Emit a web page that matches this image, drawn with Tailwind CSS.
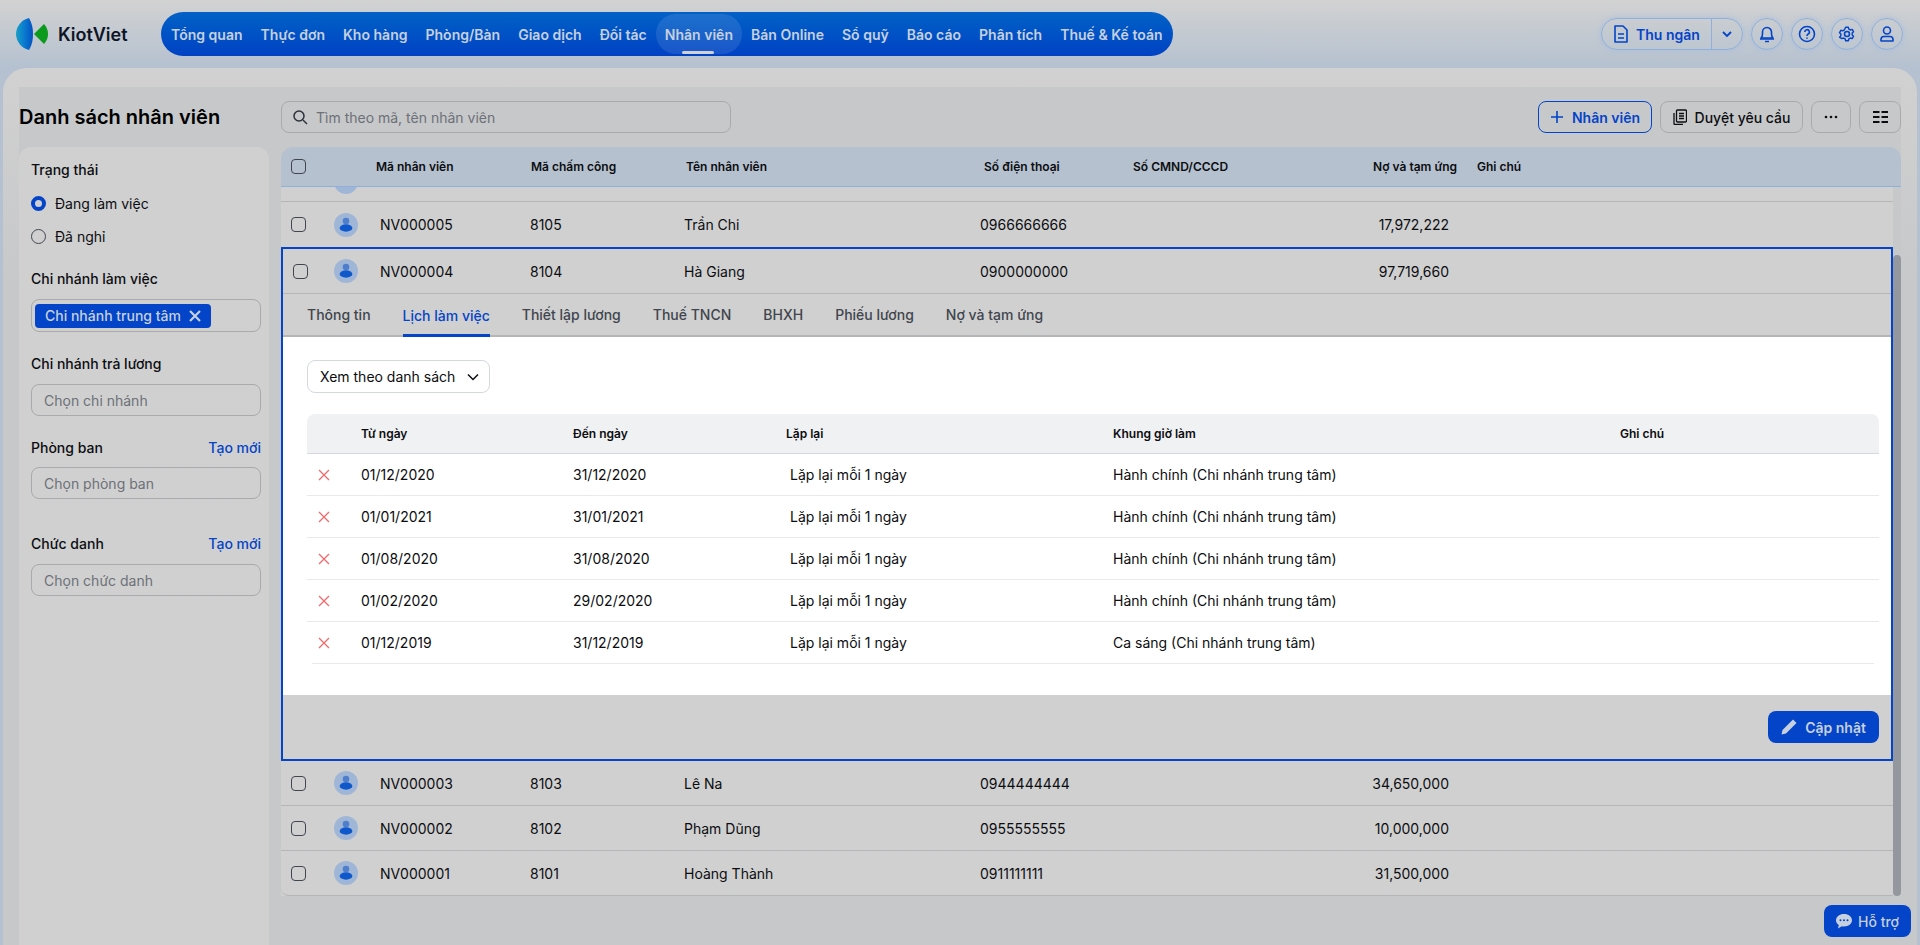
<!DOCTYPE html>
<html lang="en">
<head>
    <meta charset="UTF-8">
    <title>KiotViet - Danh sách nhân viên</title>
    <script src="https://cdn.jsdelivr.net/npm/@tailwindcss/browser@4"></script>
</head>
<body class="h-screen overflow-hidden bg-[linear-gradient(#d2d2d2,#b5c1d0_68px)] font-['Inter','Noto_Sans',sans-serif] text-[14px] text-[#0c0d10]">

<!-- Top bar -->
<header class="flex h-[68px] items-start pl-4 pr-[17px] pt-3">
    <div class="flex h-11 w-[145px] items-center gap-2.5">
        <svg width="32" height="32" viewBox="0 0 32 32">
            <defs><linearGradient id="leaf" x1="0" x2="1" y1="0" y2="0"><stop offset="0" stop-color="#17a0c4"/><stop offset="0.5" stop-color="#0a7ad0"/><stop offset="1" stop-color="#0452bf"/></linearGradient></defs>
            <path d="M13 0C5 2 0 9 0 16s5 14 13 16c3-5 4-10 4-16S16 5 13 0Z" fill="url(#leaf)"/>
            <path d="M18 16 28 6c3 3 4 7 4 10s-1 7-4 10Z" fill="#0a9a1c"/>
        </svg>
        <span class="text-[18px] font-semibold text-[#0e1526]">KiotViet</span>
    </div>
    <nav class="flex h-11 items-center gap-2 rounded-[22px] bg-gradient-to-b from-[#0561c6] to-[#0041c4] px-[5px] font-semibold tracking-[0.012px] text-[#c6d0de]">
        <a class="px-[5px]">Tổng quan</a>
        <a class="px-[5px]">Thực đơn</a>
        <a class="px-[5px]">Kho hàng</a>
        <a class="px-[5px]">Phòng/Bàn</a>
        <a class="px-[5px]">Giao dịch</a>
        <a class="px-[5px]">Đối tác</a>
        <a class="relative -mx-1 flex h-10 items-center rounded-[20px] bg-white/10 px-[9px]">Nhân viên<span class="absolute bottom-0 left-[26px] h-[3px] w-8 rounded-full bg-[#d1d1d1]"></span></a>
        <a class="px-[5px]">Bán Online</a>
        <a class="px-[5px]">Sổ quỹ</a>
        <a class="px-[5px]">Báo cáo</a>
        <a class="px-[5px]">Phân tích</a>
        <a class="px-[5px]">Thuế &amp; Kế toán</a>
    </nav>
    <div class="ml-auto mt-1.5 flex items-center gap-2 text-[#0344c8]">
        <div class="flex h-8 w-[142px] items-center rounded-full border border-[#8fb0db] shadow-[0_0_6px_#a9bfdc]">
            <span class="flex h-full w-[110px] items-center gap-[7px] border-r border-[#8fb0db] pl-[11px] font-semibold">
                <svg width="16" height="18" viewBox="0 0 16 18" fill="none" stroke="currentColor" stroke-width="1.6"><path d="M2 1h8l4 4v12H2z" stroke-linejoin="round"/><path d="M5 9h6M5 13h6"/></svg>
                Thu ngân
            </span>
            <span class="flex flex-1 justify-center">
                <svg width="12" height="8" viewBox="0 0 12 8" fill="none" stroke="currentColor" stroke-width="1.8"><path d="m2 2 4 4 4-4"/></svg>
            </span>
        </div>
        <span class="flex h-8 w-8 items-center justify-center rounded-full border border-[#8fb0db] shadow-[0_0_6px_#a9bfdc]">
            <svg width="16" height="18" viewBox="0 0 16 18" fill="none" stroke="currentColor" stroke-width="1.6"><path d="M2 13c1-1 1.500-2 1.500-4V7a4.500 4.500 0 0 1 9 0v2c0 2 .5 3 1.500 4z" stroke-linejoin="round"/><path d="M1 14h14M6 16.500h4"/></svg>
        </span>
        <span class="flex h-8 w-8 items-center justify-center rounded-full border border-[#8fb0db] shadow-[0_0_6px_#a9bfdc]">
            <svg width="18" height="18" viewBox="0 0 18 18" fill="none" stroke="currentColor" stroke-width="1.6"><circle cx="9" cy="9" r="7.500"/><path d="M6.800 7a2.300 2.300 0 1 1 3.400 2c-.8.5-1.200 1-1.200 2"/><path d="M9 12.500v1.200"/></svg>
        </span>
        <span class="flex h-8 w-8 items-center justify-center rounded-full border border-[#8fb0db] shadow-[0_0_6px_#a9bfdc]">
            <svg width="18" height="18" viewBox="0 0 18 18" fill="none" stroke="currentColor" stroke-width="1.6"><circle cx="9" cy="9" r="2.500"/><path d="M7.500 1.500h3l.5 2 1.800 1 2-.6 1.500 2.600-1.500 1.500v2l1.500 1.500-1.500 2.600-2-.6-1.800 1-.5 2h-3l-.5-2-1.800-1-2 .6L.700 12.500 2.200 11V9L.700 7.500l1.500-2.600 2 .6 1.800-1z" stroke-linejoin="round" transform="translate(.9 .9) scale(.9)"/></svg>
        </span>
        <span class="flex h-8 w-8 items-center justify-center rounded-full border border-[#8fb0db] shadow-[0_0_6px_#a9bfdc]">
            <svg width="16" height="18" viewBox="0 0 16 18" fill="none" stroke="currentColor" stroke-width="1.6"><circle cx="8" cy="5.500" r="3.500"/><path d="M2 16v-1.500c0-2 1.500-3 3-3h6c1.500 0 3 1 3 3V16z" stroke-linejoin="round"/></svg>
        </span>
    </div>
</header>

<!-- Main card -->
<main class="mx-[3px] h-[877px] rounded-t-[24px] bg-[linear-gradient(#d1d1d1,#c7c8ca_220px)] px-4 pt-[19px]">
    <div class="flex h-full gap-3 bg-[#c7c8ca] pt-[14px]">

        <!-- Left column -->
        <aside class="w-[250px] shrink-0">
            <h1 class="flex h-8 items-center text-[20px] font-semibold text-black">Danh sách nhân viên</h1>
            <div class="mt-3.5 h-[800px] rounded-t-xl bg-[#d0d0d0] pl-3 pr-2 pt-3.5 font-medium">
                <p class="leading-[17px]">Trạng thái</p>
                <label class="mt-[17px] flex items-center gap-[9px] font-normal leading-[17px]">
                    <span class="h-[15px] w-[15px] rounded-full border-[4px] border-[#0344c8] bg-[#d0d0d0]"></span>Đang làm việc
                </label>
                <label class="mt-4 flex items-center gap-[9px] font-normal leading-[17px]">
                    <span class="h-[15px] w-[15px] rounded-full border border-[#40464f]"></span>Đã nghỉ
                </label>

                <p class="mt-[25px] leading-[17px]">Chi nhánh làm việc</p>
                <div class="mt-[12px] flex h-[33px] items-center rounded-lg border border-[#a9aaab] px-[3px]">
                    <span class="flex h-6 w-[176px] items-center gap-2 rounded-[4px] bg-[#0344c8] pl-2.5 font-medium text-[#c6d0de]">Chi nhánh trung tâm
                        <svg width="12" height="12" viewBox="0 0 12 12" stroke="currentColor" stroke-width="2.2"><path d="m1 1 10 10M11 1 1 11"/></svg>
                    </span>
                </div>

                <p class="mt-[23px] leading-[17px]">Chi nhánh trả lương</p>
                <div class="mt-[12px] flex h-8 items-center rounded-lg border border-[#a9aaab] px-3 font-normal text-[#6d7178]">Chọn chi nhánh</div>

                <p class="mt-[23px] flex justify-between leading-[17px]">Phòng ban <a class="text-[#0344c8]">Tạo mới</a></p>
                <div class="mt-[11px] flex h-8 items-center rounded-lg border border-[#a9aaab] px-3 font-normal text-[#6d7178]">Chọn phòng ban</div>

                <p class="mt-[36px] flex justify-between leading-[17px]">Chức danh <a class="text-[#0344c8]">Tạo mới</a></p>
                <div class="mt-[12px] flex h-8 items-center rounded-lg border border-[#a9aaab] px-3 font-normal text-[#6d7178]">Chọn chức danh</div>
            </div>
        </aside>

        <!-- Right column -->
        <section class="min-w-0 flex-1">
            <!-- Toolbar -->
            <div class="flex h-8 items-center">
                <div class="flex h-8 w-[450px] items-center gap-2 rounded-lg border border-[#a9aaab] px-2.5 text-[#6d7178]">
                    <svg width="16" height="16" viewBox="0 0 16 16" fill="none" stroke="#2c3038" stroke-width="1.500"><circle cx="7" cy="7" r="5"/><path d="m11 11 4 4"/></svg>
                    Tìm theo mã, tên nhân viên
                </div>
                <button class="ml-auto flex h-8 w-[114px] items-center justify-center gap-2 rounded-lg border border-[#0344c8] font-semibold text-[#0344c8]">
                    <svg width="14" height="14" viewBox="0 0 14 14" stroke="currentColor" stroke-width="1.600"><path d="M7 1v12M1 7h12"/></svg>
                    Nhân viên
                </button>
                <button class="ml-2 flex h-8 w-[143px] items-center justify-center gap-2 rounded-lg border border-[#a9aaab] font-medium">
                    <svg width="14" height="16" viewBox="0 0 14 16" fill="none" stroke="currentColor" stroke-width="1.300"><rect x="3.500" y="1" width="10" height="12" rx="1"/><path d="M1 4v10.500c0 .5.500 1 1 1h8M6 4.500h5M6 7h5M6 9.500h5"/></svg>
                    Duyệt yêu cầu
                </button>
                <button class="ml-2 flex h-8 w-10 items-center justify-center rounded-lg border border-[#a9aaab]">
                    <svg width="14" height="4" viewBox="0 0 14 4" fill="currentColor"><circle cx="2" cy="2" r="1.300"/><circle cx="7" cy="2" r="1.300"/><circle cx="12" cy="2" r="1.300"/></svg>
                </button>
                <button class="ml-2 flex h-8 w-[42px] items-center justify-center rounded-lg border border-[#a9aaab]">
                    <svg width="15" height="12" viewBox="0 0 15 12" fill="currentColor"><path d="M0 0h6.500v2H0zM8.500 0H15v2H8.500zM0 5h6.500v2H0zM8.500 5H15v2H8.500zM0 10h6.500v2H0zM8.500 10H15v2H8.500z"/></svg>
                </button>
            </div>

            <!-- Table -->
            <div class="relative mt-3.5">
                <div class="grid h-[40px] grid-cols-[95px_155px_155px_298px_149px_150px_194px_1fr] items-center rounded-t-xl border-b border-[#8fb0db] bg-[#b5c1cf] text-[12px] font-semibold">
                    <span class="pl-[10px]"><span class="block h-[15px] w-[15px] rounded-[4px] border border-[#40464f]"></span></span>
                    <span>Mã nhân viên</span>
                    <span>Mã chấm công</span>
                    <span>Tên nhân viên</span>
                    <span>Số điện thoại</span>
                    <span>Số CMND/CCCD</span>
                    <span class="pr-5 text-right">Nợ và tạm ứng</span>
                    <span>Ghi chú</span>
                </div>
                <div class="mr-2 h-[15px] overflow-hidden border-b border-[#b4b5b6] bg-[#d0d0d0] pl-[53px]">
                    <span class="-mt-[17px] block h-6 w-6 rounded-full bg-[#a0b6d7]"></span>
                </div>
                <div class="mr-2 bg-[#d0d0d0]">
                    <div class="grid h-[45px] grid-cols-[99px_150px_154px_296px_180px_289px] items-center text-[14px]">
                        <span class="flex items-center pl-[10px]"><span class="block h-[15px] w-[15px] rounded-[4px] border border-[#40464f]"></span>
                            <svg class="ml-[28px]" width="24" height="24" viewBox="0 0 24 24"><circle cx="12" cy="12" r="12" fill="#a0b6d7"/><circle cx="12" cy="8" r="3.300" fill="#4f7fcb"/><ellipse cx="12" cy="15" rx="6.400" ry="3.700" fill="#0f58cc"/></svg>
                        </span>
                        <span>NV000005</span><span>8105</span><span>Trần Chi</span><span>0966666666</span>
                        <span class="text-right">17,972,222</span>
                    </div>

                    <!-- Expanded row -->
                    <div class="border-2 border-[#0344c8]">
                        <div class="grid h-[45px] grid-cols-[97px_150px_154px_296px_180px_289px] items-center border-b border-[#b4b5b6]">
                            <span class="flex items-center pl-[10px]"><span class="block h-[15px] w-[15px] rounded-[4px] border border-[#40464f]"></span>
                                <svg class="ml-[26px]" width="24" height="24" viewBox="0 0 24 24"><circle cx="12" cy="12" r="12" fill="#a0b6d7"/><circle cx="12" cy="8" r="3.300" fill="#4f7fcb"/><ellipse cx="12" cy="15" rx="6.400" ry="3.700" fill="#0f58cc"/></svg>
                            </span>
                            <span>NV000004</span><span>8104</span><span>Hà Giang</span><span>0900000000</span>
                            <span class="text-right">97,719,660</span>
                        </div>
                        <div class="flex h-[43px] gap-8 border-b-2 border-[#b4b5b6] pl-6 font-medium text-[#40454d]">
                            <span class="flex items-center">Thông tin</span>
                            <span class="-mb-[2px] flex items-center border-b-[3px] border-[#0344c8] pt-[3px] text-[#0344c8]">Lịch làm việc</span>
                            <span class="flex items-center">Thiết lập lương</span>
                            <span class="flex items-center">Thuế TNCN</span>
                            <span class="flex items-center">BHXH</span>
                            <span class="flex items-center">Phiếu lương</span>
                            <span class="flex items-center">Nợ và tạm ứng</span>
                        </div>
                        <div class="h-[358px] bg-white pl-6 pr-3 pt-[23px]">
                            <div class="flex h-[33px] w-[183px] items-center justify-between rounded-lg border border-[#d5d8dc] pl-3 pr-2.5">
                                Xem theo danh sách
                                <svg width="12" height="8" viewBox="0 0 12 8" fill="none" stroke="currentColor" stroke-width="1.500"><path d="m1 1.500 5 5 5-5"/></svg>
                            </div>
                            <div class="mt-[21px]">
                                <div class="grid h-[40px] grid-cols-[54px_212px_213px_327px_507px_1fr] items-center rounded-t-lg border-b border-[#d5d8dc] bg-[#f0f1f3] text-[12px] font-semibold">
                                    <span></span><span>Từ ngày</span><span>Đến ngày</span><span>Lặp lại</span><span>Khung giờ làm</span><span>Ghi chú</span>
                                </div>
                                <div class="grid h-[42px] grid-cols-[54px_212px_213px_327px_507px_1fr] items-center border-b border-[#e8e9eb]">
                                    <svg class="ml-[11px]" width="12" height="12" viewBox="0 0 12 12" stroke="#f0696c" stroke-width="1.300"><path d="m1 1 10 10M11 1 1 11"/></svg>
                                    <span>01/12/2020</span><span>31/12/2020</span><span class="pl-1">Lặp lại mỗi 1 ngày</span><span>Hành chính (Chi nhánh trung tâm)</span><span></span>
                                </div>
                                <div class="grid h-[42px] grid-cols-[54px_212px_213px_327px_507px_1fr] items-center border-b border-[#e8e9eb]">
                                    <svg class="ml-[11px]" width="12" height="12" viewBox="0 0 12 12" stroke="#f0696c" stroke-width="1.300"><path d="m1 1 10 10M11 1 1 11"/></svg>
                                    <span>01/01/2021</span><span>31/01/2021</span><span class="pl-1">Lặp lại mỗi 1 ngày</span><span>Hành chính (Chi nhánh trung tâm)</span><span></span>
                                </div>
                                <div class="grid h-[42px] grid-cols-[54px_212px_213px_327px_507px_1fr] items-center border-b border-[#e8e9eb]">
                                    <svg class="ml-[11px]" width="12" height="12" viewBox="0 0 12 12" stroke="#f0696c" stroke-width="1.300"><path d="m1 1 10 10M11 1 1 11"/></svg>
                                    <span>01/08/2020</span><span>31/08/2020</span><span class="pl-1">Lặp lại mỗi 1 ngày</span><span>Hành chính (Chi nhánh trung tâm)</span><span></span>
                                </div>
                                <div class="grid h-[42px] grid-cols-[54px_212px_213px_327px_507px_1fr] items-center border-b border-[#e8e9eb]">
                                    <svg class="ml-[11px]" width="12" height="12" viewBox="0 0 12 12" stroke="#f0696c" stroke-width="1.300"><path d="m1 1 10 10M11 1 1 11"/></svg>
                                    <span>01/02/2020</span><span>29/02/2020</span><span class="pl-1">Lặp lại mỗi 1 ngày</span><span>Hành chính (Chi nhánh trung tâm)</span><span></span>
                                </div>
                                <div class="ml-[5px] mr-[5px] grid h-[42px] grid-cols-[49px_212px_213px_327px_507px_1fr] items-center border-b border-[#e8e9eb]">
                                    <svg class="ml-[6px]" width="12" height="12" viewBox="0 0 12 12" stroke="#f0696c" stroke-width="1.300"><path d="m1 1 10 10M11 1 1 11"/></svg>
                                    <span>01/12/2019</span><span>31/12/2019</span><span class="pl-1">Lặp lại mỗi 1 ngày</span><span>Ca sáng (Chi nhánh trung tâm)</span><span></span>
                                </div>
                            </div>
                        </div>
                        <div class="flex h-[64px] items-start justify-end pr-3 pt-4">
                            <button class="flex h-8 w-[111px] items-center justify-center gap-2 rounded-lg bg-[#0344c8] font-semibold text-[#c6d0de]">
                                <svg width="16" height="16" viewBox="0 0 16 16" fill="currentColor"><path d="M12 .5 15.500 4 5 14.500l-4.500 1 1-4.500z"/></svg>
                                Cập nhật
                            </button>
                        </div>
                    </div>

                    <div class="grid h-[45px] grid-cols-[99px_150px_154px_296px_180px_289px] items-center border-b border-[#b4b5b6]">
                        <span class="flex items-center pl-[10px]"><span class="block h-[15px] w-[15px] rounded-[4px] border border-[#40464f]"></span>
                            <svg class="ml-[28px]" width="24" height="24" viewBox="0 0 24 24"><circle cx="12" cy="12" r="12" fill="#a0b6d7"/><circle cx="12" cy="8" r="3.300" fill="#4f7fcb"/><ellipse cx="12" cy="15" rx="6.400" ry="3.700" fill="#0f58cc"/></svg>
                        </span>
                        <span>NV000003</span><span>8103</span><span>Lê Na</span><span>0944444444</span>
                        <span class="text-right">34,650,000</span>
                    </div>
                    <div class="grid h-[45px] grid-cols-[99px_150px_154px_296px_180px_289px] items-center border-b border-[#b4b5b6]">
                        <span class="flex items-center pl-[10px]"><span class="block h-[15px] w-[15px] rounded-[4px] border border-[#40464f]"></span>
                            <svg class="ml-[28px]" width="24" height="24" viewBox="0 0 24 24"><circle cx="12" cy="12" r="12" fill="#a0b6d7"/><circle cx="12" cy="8" r="3.300" fill="#4f7fcb"/><ellipse cx="12" cy="15" rx="6.400" ry="3.700" fill="#0f58cc"/></svg>
                        </span>
                        <span>NV000002</span><span>8102</span><span>Phạm Dũng</span><span>0955555555</span>
                        <span class="text-right">10,000,000</span>
                    </div>
                    <div class="grid h-[45px] grid-cols-[99px_150px_154px_296px_180px_289px] items-center rounded-bl-lg border-b border-[#b4b5b6]">
                        <span class="flex items-center pl-[10px]"><span class="block h-[15px] w-[15px] rounded-[4px] border border-[#40464f]"></span>
                            <svg class="ml-[28px]" width="24" height="24" viewBox="0 0 24 24"><circle cx="12" cy="12" r="12" fill="#a0b6d7"/><circle cx="12" cy="8" r="3.300" fill="#4f7fcb"/><ellipse cx="12" cy="15" rx="6.400" ry="3.700" fill="#0f58cc"/></svg>
                        </span>
                        <span>NV000001</span><span>8101</span><span>Hoàng Thành</span><span>0911111111</span>
                        <span class="text-right">31,500,000</span>
                    </div>
                </div>
                <!-- Scrollbar -->
                <div class="absolute bottom-0 right-0 top-[108px] w-2 rounded-full bg-[#94979e]"></div>
            </div>
        </section>
    </div>
</main>

<!-- Support button -->
<button class="fixed bottom-2 right-[9px] flex h-8 w-[87px] items-center justify-center gap-1.5 rounded-lg bg-[#0344c8] font-medium text-[#c6d0de]">
    <svg width="16" height="16" viewBox="0 0 16 16"><path d="M8 1c4.400 0 8 2.700 8 6.300s-3.600 6.200-8 6.200c-.8 0-1.500-.1-2.200-.3L2 15.500l.8-3.400C1 11 0 9.300 0 7.300 0 3.700 3.600 1 8 1Z" fill="currentColor"/><circle cx="4.500" cy="7.300" r="1" fill="#0344c8"/><circle cx="8" cy="7.300" r="1" fill="#0344c8"/><circle cx="11.500" cy="7.300" r="1" fill="#0344c8"/></svg>
    Hỗ trợ
</button>

</body>
</html>
